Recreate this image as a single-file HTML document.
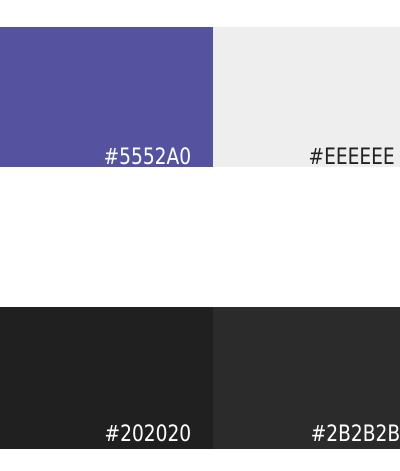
<!DOCTYPE html>
<html><head><style>
html,body{margin:0;padding:0;width:400px;height:471px;overflow:hidden;background:#fff;position:relative}
.b{position:absolute}
.t{position:absolute;font-family:"DejaVu Sans Condensed","DejaVu Sans","Liberation Sans",sans-serif;font-stretch:condensed;font-size:22px;line-height:22px;white-space:nowrap;transform:scaleX(0.94);transform-origin:right center}
</style></head><body>
<div class="b" style="left:0;top:27px;width:213px;height:140px;background:#5552A0"></div>
<div class="b" style="left:213px;top:27px;width:187px;height:140px;background:#EEEEEE"></div>
<div class="b" style="left:0;top:307px;width:213px;height:142px;background:#202020"></div>
<div class="b" style="left:213px;top:307px;width:187px;height:142px;background:#2B2B2B"></div>
<div class="t" style="right:209px;top:147px;color:#fff">#5552A0</div>
<div class="t" style="right:5px;top:147px;color:#222">#EEEEEE</div>
<div class="t" style="right:209px;top:424px;color:#fff">#202020</div>
<div class="t" style="right:0px;top:424px;color:#fff">#2B2B2B</div>
</body></html>
